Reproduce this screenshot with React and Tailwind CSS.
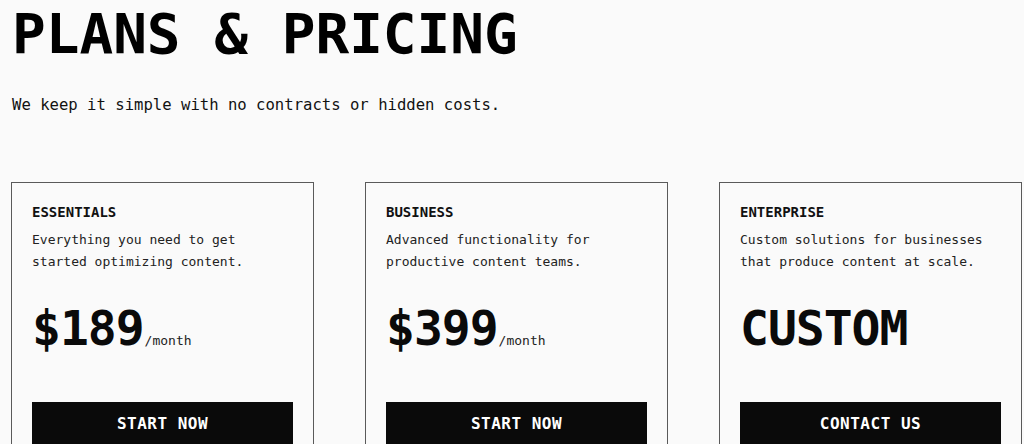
import React from "react";

const plans = [
  {
    name: "ESSENTIALS",
    desc: ["Everything you need to get", "started optimizing content."],
    price: "$189",
    per: "/month",
    cta: "START NOW",
  },
  {
    name: "BUSINESS",
    desc: ["Advanced functionality for", "productive content teams."],
    price: "$399",
    per: "/month",
    cta: "START NOW",
  },
  {
    name: "ENTERPRISE",
    desc: ["Custom solutions for businesses", "that produce content at scale."],
    price: "CUSTOM",
    per: null,
    cta: "CONTACT US",
  },
];

const PlanCard = ({ plan }) => {
  return (
    <div className="w-[303px] h-[300px] border border-[#5a5a5a] px-[20px] pt-[20px] shrink-0">
      <h3 className="text-[14px] font-bold leading-[18px] text-[#111]">{plan.name}</h3>
      <p className="mt-[8px] text-[13px] leading-[22px] text-[#222]">
        {plan.desc[0]}
        <br />
        {plan.desc[1]}
      </p>
      <div className="mt-[25px] flex items-baseline h-[60px]">
        <span className="text-[48px] font-bold leading-[60px] tracking-[-1px] text-[#0a0a0a]">
          {plan.price}
        </span>
        {plan.per && <span className="text-[13px] text-[#222] ml-[1px]">{plan.per}</span>}
      </div>
      <button className="mt-[44px] w-full h-[52px] pt-[12px] bg-[#0a0a0a] text-white text-[16px] leading-[20px] font-bold tracking-[0.5px] flex items-start justify-center">
        {plan.cta}
      </button>
    </div>
  );
};

export default function App() {
  return (
    <div
      className="w-[1024px] h-[444px] overflow-hidden bg-[#fafafa] text-black"
      style={{ fontFamily: '"DejaVu Sans Mono", "Liberation Mono", monospace' }}
    >
      <div className="pl-[12px] pt-[2px]">
        <h1 className="text-[56px] font-bold leading-[64px] tracking-[0px]">PLANS &amp; PRICING</h1>
        <p className="mt-[29px] text-[15.6px] leading-[20px] text-[#111]">
          We keep it simple with no contracts or hidden costs.
        </p>
      </div>
      <div className="mt-[67px] pl-[11px] flex gap-[51px]">
        {plans.map((plan) => (
          <PlanCard key={plan.name} plan={plan} />
        ))}
      </div>
    </div>
  );
}
